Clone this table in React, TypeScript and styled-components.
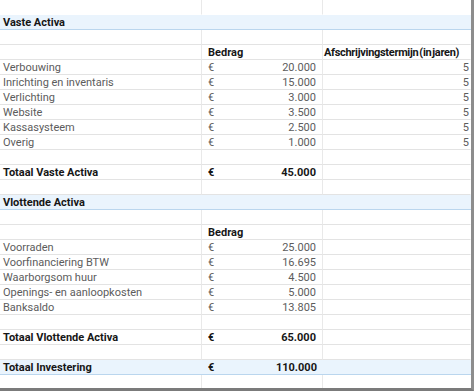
import React from "react";
import styled, { createGlobalStyle, css } from "styled-components";

const Global = createGlobalStyle`
  html, body { margin: 0; padding: 0; background: #ffffff; }
  body { font-family: Roboto, "Liberation Sans", sans-serif; }
`;

const Frame = styled.div`
  width: 474px;
  height: 391px;
  box-sizing: border-box;
  border-right: 3px solid #8d8d8d;
  border-bottom: 3px solid #7b7b7b;
  overflow: hidden;
  background: #fff;
`;

const Sheet = styled.div`
  display: grid;
  grid-template-columns: 202px 121px 148px;
  grid-auto-rows: 15px;
`;

type Tone = "plain" | "bold";

const Cell = styled.div<{ $tone?: Tone; $align?: "left" | "right"; $last?: boolean }>`
  box-sizing: border-box;
  height: 15px;
  border-bottom: 1px solid #e3e3e3;
  border-right: 1px solid ${(p) => (p.$last ? "transparent" : "#e9e9e9")};
  padding: 0 3px;
  font-size: 11px;
  line-height: 15px;
  white-space: nowrap;
  overflow: visible;
  color: ${(p) => (p.$tone === "bold" ? "#161616" : "#5c5c5c")};
  font-weight: ${(p) => (p.$tone === "bold" ? 700 : 400)};
  text-align: ${(p) => p.$align ?? "left"};
`;

const TopCell = styled(Cell)`
  border-bottom-color: transparent;
`;

const Band = styled.div`
  grid-column: 1 / -1;
  box-sizing: border-box;
  height: 15px;
  background: #eaf4fd;
  border-bottom: 1px solid #bad6ee;
  display: grid;
  grid-template-columns: 202px 121px 148px;
  font-size: 11px;
  line-height: 15px;
  font-weight: 700;
  color: #161616;
  white-space: nowrap;
`;

const BandText = styled.span`
  padding: 0 3px;
`;

const Amount = styled(Cell)`
  display: flex;
  justify-content: space-between;
  padding: 0 6px 0 6px;
`;

const BandAmount = styled.span`
  display: flex;
  justify-content: space-between;
  padding: 0 6px 0 6px;
`;

const HeaderText = styled(Cell)<{ $tight?: boolean }>`
  ${(p) =>
    p.$tight &&
    css`
      letter-spacing: -0.3px;
      word-spacing: -1.5px;
    `}
`;

type Row =
  | { kind: "blank" }
  | { kind: "top" }
  | { kind: "section"; label: string }
  | { kind: "header"; extra?: string }
  | { kind: "item"; label: string; amount: string; years?: string }
  | { kind: "total"; label: string; amount: string }
  | { kind: "grand"; label: string; amount: string };

const rows: Row[] = [
  { kind: "top" },
  { kind: "section", label: "Vaste Activa" },
  { kind: "blank" },
  { kind: "header", extra: "Afschrijvingstermijn (in jaren)" },
  { kind: "item", label: "Verbouwing", amount: "20.000", years: "5" },
  { kind: "item", label: "Inrichting en inventaris", amount: "15.000", years: "5" },
  { kind: "item", label: "Verlichting", amount: "3.000", years: "5" },
  { kind: "item", label: "Website", amount: "3.500", years: "5" },
  { kind: "item", label: "Kassasysteem", amount: "2.500", years: "5" },
  { kind: "item", label: "Overig", amount: "1.000", years: "5" },
  { kind: "blank" },
  { kind: "total", label: "Totaal Vaste Activa", amount: "45.000" },
  { kind: "blank" },
  { kind: "section", label: "Vlottende Activa" },
  { kind: "blank" },
  { kind: "header" },
  { kind: "item", label: "Voorraden", amount: "25.000" },
  { kind: "item", label: "Voorfinanciering BTW", amount: "16.695" },
  { kind: "item", label: "Waarborgsom huur", amount: "4.500" },
  { kind: "item", label: "Openings- en aanloopkosten", amount: "5.000" },
  { kind: "item", label: "Banksaldo", amount: "13.805" },
  { kind: "blank" },
  { kind: "total", label: "Totaal Vlottende Activa", amount: "65.000" },
  { kind: "blank" },
  { kind: "grand", label: "Totaal Investering", amount: "110.000" },
  { kind: "blank" },
];

function renderRow(r: Row, i: number) {
  switch (r.kind) {
    case "top":
      return (
        <React.Fragment key={i}>
          <TopCell />
          <TopCell />
          <TopCell $last />
        </React.Fragment>
      );
    case "blank":
      return (
        <React.Fragment key={i}>
          <Cell />
          <Cell />
          <Cell $last />
        </React.Fragment>
      );
    case "section":
      return (
        <Band key={i}>
          <BandText>{r.label}</BandText>
        </Band>
      );
    case "header":
      return (
        <React.Fragment key={i}>
          <Cell />
          <HeaderText $tone="bold" style={{ paddingLeft: 6 }}>
            Bedrag
          </HeaderText>
          <HeaderText $tone="bold" $tight $last style={{ paddingLeft: 1 }}>
            {r.extra ?? ""}
          </HeaderText>
        </React.Fragment>
      );
    case "item":
      return (
        <React.Fragment key={i}>
          <Cell>{r.label}</Cell>
          <Amount>
            <span>€</span>
            <span>{r.amount}</span>
          </Amount>
          <Cell $align="right" $last style={{ paddingRight: 1 }}>
            {r.years ?? ""}
          </Cell>
        </React.Fragment>
      );
    case "total":
      return (
        <React.Fragment key={i}>
          <Cell $tone="bold">{r.label}</Cell>
          <Amount $tone="bold">
            <span>€</span>
            <span>{r.amount}</span>
          </Amount>
          <Cell $last />
        </React.Fragment>
      );
    case "grand":
      return (
        <Band key={i}>
          <BandText>{r.label}</BandText>
          <BandAmount>
            <span>€</span>
            <span>{r.amount}</span>
          </BandAmount>
        </Band>
      );
  }
}

export default function App() {
  return (
    <>
      <Global />
      <Frame>
        <Sheet>{rows.map(renderRow)}</Sheet>
      </Frame>
    </>
  );
}
